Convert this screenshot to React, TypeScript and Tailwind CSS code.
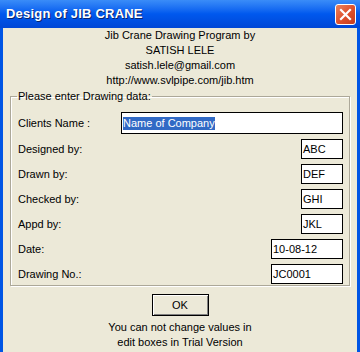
const rows = [
  { label: "Designed by:", value: "ABC", w: "w-[42px]" },
  { label: "Drawn by:", value: "DEF", w: "w-[42px]" },
  { label: "Checked by:", value: "GHI", w: "w-[42px]" },
  { label: "Appd by:", value: "JKL", w: "w-[42px]" },
  { label: "Date:", value: "10-08-12", w: "w-[72px]" },
  { label: "Drawing No.:", value: "JC0001", w: "w-[72px]" },
];

function Field({ value, w }: { value: string; w: string }) {
  return (
    <div
      className={`${w} h-[20px] bg-white border border-black pl-[1px] flex items-center text-[11px] text-black leading-[13px]`}
    >
      {value}
    </div>
  );
}

export default function App() {
  return (
    <div className="w-[360px] h-[352px] overflow-hidden bg-[#0055E5] flex flex-col font-['Liberation_Sans',Arial,sans-serif] text-[11px] text-black select-none">
      {/* title bar */}
      <div className="h-[28px] shrink-0 flex items-center justify-between pl-[6px] pr-[4px] bg-gradient-to-b from-[#3A8CF8] via-[#0058EE] to-[#0047D6]">
        <span className="text-white font-bold text-[13px] tracking-[0.2px] [text-shadow:1px_1px_0_#0A246A]">
          Design of JIB CRANE
        </span>
        <button className="w-[21px] h-[21px] rounded-[3px] border border-white bg-gradient-to-br from-[#E8825E] via-[#E0522E] to-[#C63C1E] flex items-center justify-center">
          <svg width="13" height="13" viewBox="0 0 13 13">
            <path d="M2 2 L11 11 M11 2 L2 11" stroke="white" strokeWidth="2.2" strokeLinecap="square" />
          </svg>
        </button>
      </div>

      {/* body */}
      <div className="flex-1 mx-[3px] bg-[#ECE9D8] flex flex-col">
        <div className="flex flex-col items-center leading-[15px]">
          <span>Jib Crane Drawing Program by</span>
          <span>SATISH LELE</span>
          <span>satish.lele@gmail.com</span>
          <span>http://www.svlpipe.com/jib.htm</span>
        </div>

        <fieldset className="ml-[7px] mt-[1px] w-[340px] border border-[#ACA899] shadow-[inset_1px_1px_0_#fff,1px_1px_0_#fff] pl-[7px] pr-[6px] pb-[1px]">
          <legend className="px-[1px] -ml-[1px] leading-[15px]">Please enter Drawing data:</legend>
          <div className="flex flex-col gap-[5px] mt-[8px]">
            <div className="flex items-center justify-between">
              <span>Clients Name :</span>
              <div className="w-[222px] h-[22px] bg-white border border-black pl-[1px] flex items-center">
                <span className="bg-[#316AC5] text-white leading-[13px]">Name of Company</span>
              </div>
            </div>
            {rows.map((r) => (
              <div key={r.label} className="flex items-center justify-between">
                <span>{r.label}</span>
                <Field value={r.value} w={r.w} />
              </div>
            ))}
          </div>
        </fieldset>

        <button className="mt-[8px] mx-auto w-[57px] h-[22px] border border-black bg-[#ECE9D8] shadow-[inset_1px_1px_0_#fff,inset_-1px_-1px_0_#808080] text-[11px]">
          OK
        </button>
        <div className="mt-[4px] flex flex-col items-center leading-[15px]">
          <span>You can not change values in</span>
          <span>edit boxes in Trial Version</span>
        </div>
      </div>
    </div>
  );
}
